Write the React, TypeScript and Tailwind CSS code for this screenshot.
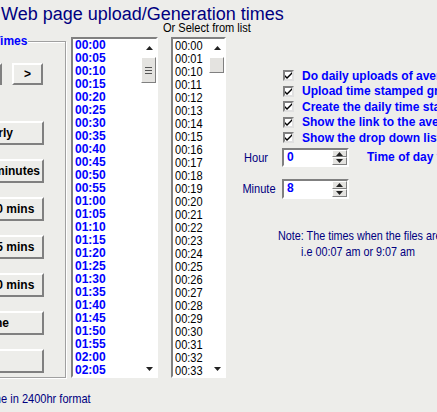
import React from "react";

const BLUE_TIMES = Array.from({ length: 26 }, (_, i) => {
  const m = i * 5;
  return `${String(Math.floor(m / 60)).padStart(2, "0")}:${String(m % 60).padStart(2, "0")}`;
});

const PLAIN_TIMES = ["00:00", "00:01", ...Array.from({ length: 24 }, (_, i) => `00:${i + 10}`)];

const CHECKS = [
  "Do daily uploads of average graphs",
  "Upload time stamped graphs",
  "Create the daily time stamped pages",
  "Show the link to the average page",
  "Show the drop down list of times",
];

const COL_BUTTONS = ["Hourly", "Every 5 minutes", "Every 10 mins", "Every 15 mins", "Every 30 mins", "None", ""];

const sans = { fontFamily: '"Liberation Sans", Arial, sans-serif' };

// the old window font is narrower than Arial, so regular text is squeezed a bit
const squeeze = "scale-x-[0.85]";

function Arrow({ down }: { down?: boolean }) {
  return (
    <svg width="7" height="4" viewBox="0 0 7 4">
      <path d={down ? "M0 0h7L3.5 4z" : "M3.5 0L7 4H0z"} fill="#222" />
    </svg>
  );
}

function RaisedButton({ children, className }: { children?: React.ReactNode; className?: string }) {
  return (
    <div
      className={`flex items-center justify-center border-2 border-t-white border-l-white border-r-[#808080] border-b-[#808080] text-[12px] font-bold text-black whitespace-nowrap ${className ?? ""}`}
      style={sans}
    >
      {children}
    </div>
  );
}

function ListBox({ items, blue, width, thumbH, grip }: { items: string[]; blue?: boolean; width: string; thumbH: string; grip?: boolean }) {
  return (
    <div className={`flex h-[341px] ${width} border-2 border-t-[#808080] border-l-[#808080] border-r-white border-b-white bg-white`}>
      <div className="flex-1 pl-[2px] overflow-hidden">
        {items.map((t) => (
          <div
            key={t}
            className={
              blue
                ? "h-[13px] leading-[13px] text-[12px] font-bold text-[#0000ff]"
                : `h-[13px] leading-[13px] text-[13px] text-black origin-left ${squeeze}`
            }
            style={sans}
          >
            {t}
          </div>
        ))}
      </div>
      <div className="w-[15px] flex flex-col items-center">
        <div className="h-[18px] flex items-center justify-center pl-[1px]">
          <Arrow />
        </div>
        <div className={`w-[15px] ${thumbH} bg-[#e4e3e0] border border-t-white border-l-white border-r-[#808080] border-b-[#808080] flex flex-col items-center justify-center gap-[2px]`}>
          {grip && (
            <>
              <div className="w-[7px] h-[1px] bg-[#555]" />
              <div className="w-[7px] h-[1px] bg-[#555]" />
              <div className="w-[7px] h-[1px] bg-[#555]" />
            </>
          )}
        </div>
        <div className="flex-1" />
        <div className="h-[14px] flex items-center justify-center pl-[1px]">
          <Arrow down />
        </div>
      </div>
    </div>
  );
}

function Spin({ value, h }: { value: string; h: string }) {
  return (
    <div className={`flex w-[67px] ${h} border-2 border-t-[#808080] border-l-[#808080] border-r-white border-b-white bg-white`}>
      <div className="flex-1 pl-[3px] text-[12px] font-bold text-[#0000ff] leading-[15px]" style={sans}>
        {value}
      </div>
      <div className="w-[15px] flex flex-col bg-[#e4e3e0]">
        <div className="flex-1 flex items-center justify-center border border-t-white border-l-white border-r-[#808080] border-b-[#808080]">
          <Arrow />
        </div>
        <div className="flex-1 flex items-center justify-center border border-t-white border-l-white border-r-[#808080] border-b-[#808080]">
          <Arrow down />
        </div>
      </div>
    </div>
  );
}

export default function App() {
  return (
    <div className="w-[437px] h-[412px] overflow-hidden bg-[#ededea]" style={sans}>
      <div className="ml-[1px] pt-[5px] h-[23px] text-[18px] leading-[18px] text-[#000080] whitespace-nowrap">
        Web page upload/Generation times
      </div>
      <div className="flex items-start">
        {/* left group */}
        <div className="ml-[-80px] w-[146px] shrink-0">
          <div className="relative mt-[18px] h-[337px] border border-[#a0a0a0] shadow-[inset_1px_1px_0_white,1px_1px_0_white]">
            <div className="absolute top-[-8px] left-[72px] pr-[1px] bg-[#ededea] text-[12px] leading-[14px] font-bold text-[#0000ff]">
              Times
            </div>
            <div className="flex gap-[10px] ml-[50px] mt-[21px]">
              <RaisedButton className="w-[31px] h-[22px]">&lt;</RaisedButton>
              <RaisedButton className="w-[31px] h-[22px]">&gt;</RaisedButton>
            </div>
            <div className="flex flex-col gap-[14px] ml-[23px] mt-[36px]">
              {COL_BUTTONS.map((b, i) => (
                <RaisedButton key={i} className="w-[100px] h-[24px]">
                  {b}
                </RaisedButton>
              ))}
            </div>
          </div>
          <div className={`mt-[13px] ml-[63px] text-[13px] leading-[15px] text-[#000080] whitespace-nowrap origin-left ${squeeze}`}>
            Time in 2400hr format
          </div>
        </div>

        {/* blue list */}
        <div className="ml-[5px] mt-[14px] shrink-0">
          <ListBox items={BLUE_TIMES} blue width="w-[87px]" thumbH="h-[26px]" grip />
        </div>

        {/* plain list */}
        <div className="ml-[5px] w-[63px] shrink-0 mt-[-2px]">
          <div className={`h-[14px] text-[13px] leading-[14px] text-black whitespace-nowrap origin-left ${squeeze}`}>
            Or Select from list
          </div>
          <div className="ml-[8px] mt-[2px]">
            <ListBox items={PLAIN_TIMES} width="w-[55px]" thumbH="h-[16px]" />
          </div>
        </div>

        {/* right panel */}
        <div className="ml-[14px] shrink-0 w-[260px]">
          <div className="mt-[45px] ml-[43px]">
            {CHECKS.map((c) => (
              <div key={c} className="flex items-center h-[15.5px] gap-[8px]">
                <div className="w-[11px] h-[11px] bg-white border-2 border-t-[#808080] border-l-[#808080] border-r-[#e0e0e0] border-b-[#e0e0e0] flex items-center justify-center">
                  <svg width="7" height="7" viewBox="0 0 7 7">
                    <path d="M0 3l2 2 5-5v2L2 7 0 5z" fill="#000" />
                  </svg>
                </div>
                <div className="text-[12px] font-bold text-[#0000ff] whitespace-nowrap leading-[14px]">{c}</div>
              </div>
            ))}
          </div>
          <div className="flex items-center mt-[2px]">
            <div className={`w-[32px] text-center text-[13px] text-[#000080] ${squeeze}`}>Hour</div>
            <div className="ml-[10px]">
              <Spin value="0" h="h-[19px]" />
            </div>
            <div className="ml-[18px] text-[12px] font-bold text-[#0000ff] whitespace-nowrap">Time of day to upload</div>
          </div>
          <div className="flex items-center mt-[12px]">
            <div className={`w-[32px] text-center text-[13px] text-[#000080] ${squeeze}`}>Minute</div>
            <div className="ml-[10px]">
              <Spin value="8" h="h-[20px]" />
            </div>
          </div>
          <div className="ml-[38px] mt-[29px] w-[160px] text-[13px] leading-[16px] text-[#000080] whitespace-nowrap">
            <div className="origin-left scale-x-[0.83]">Note: The times when the files are uploaded</div>
            <div className="text-center scale-x-[0.83]">i.e 00:07 am or 9:07 am</div>
          </div>
        </div>
      </div>
    </div>
  );
}
